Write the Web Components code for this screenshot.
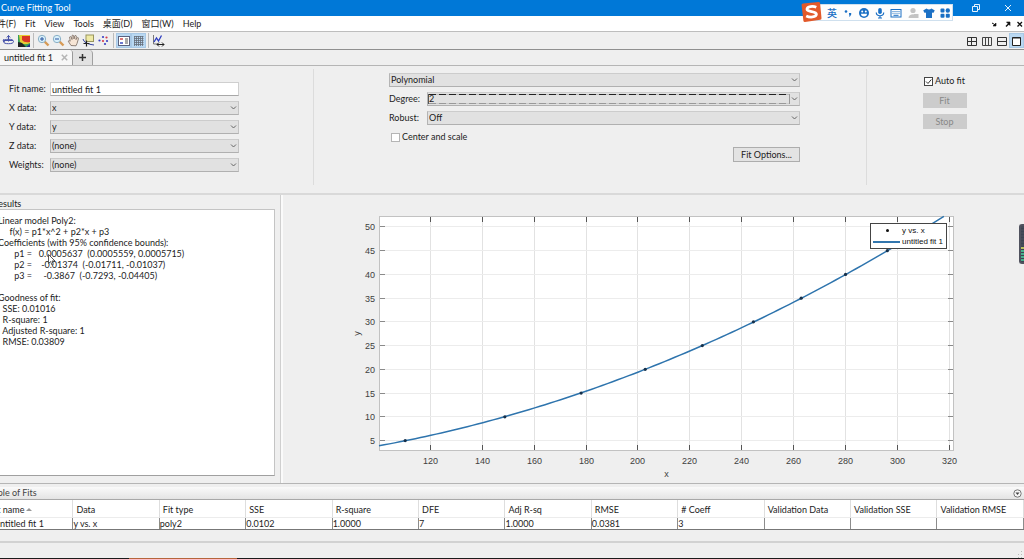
<!DOCTYPE html>
<html lang="en">
<head>
<meta charset="utf-8">
<title>Curve Fitting Tool</title>
<style>
  html, body { margin: 0; height: 100%; }
  body { font: 9px/12px Lato, "Noto Sans CJK SC", sans-serif; color: #1c1c1c; background: #efefef; overflow: hidden; }
</style>
</head>
<body>
<cf-app></cf-app>
<script>
const define = (name, html, setup) => {
  const template = document.createElement('template');
  template.innerHTML = html;
  customElements.define(name, class extends HTMLElement {
    connectedCallback() {
      if (this.shadowRoot) return;
      const root = this.attachShadow({ mode: 'open' });
      root.append(template.content.cloneNode(true));
      if (setup) setup(this, root);
    }
  });
};

/* ---------- title bar ---------- */
define('cf-titlebar', `
<style>
  :host { display: flex; align-items: center; justify-content: space-between; height: 16px; background: #0078d7; color: #fff; }
  span { padding-left: 1px; }
  div { display: flex; gap: 20px; padding-right: 10px; }
  button { all: unset; display: block; width: 12px; height: 12px; }
  svg { display: block; }
</style>
<span>Curve Fitting Tool</span>
<div>
  <button aria-label="Restore"><svg width="12" height="12" viewBox="0 0 12 12" fill="none" stroke="#e8f3fc"><path d="M2.500 4.500h5v5h-5zM4.500 4V2.500h5v5H8"/></svg></button>
  <button aria-label="Close"><svg width="12" height="12" viewBox="0 0 12 12" fill="none" stroke="#e8f3fc"><path d="M3 3l6 6M9 3l-6 6"/></svg></button>
</div>`);

/* ---------- input method bar ---------- */
define('cf-ime', `
<style>
  :host { display: flex; align-items: center; height: 17px; padding-left: 22px; background: #fdfdfd; border: 1px solid #cfe0ee; box-sizing: border-box; width: 149px; color: #1a6fc4; }
  .logo { position: absolute; left: -4px; top: -4px; }
  b { font: 500 10px/14px "Noto Sans CJK SC", sans-serif; width: 15px; }
  .row { display: flex; flex: 1; justify-content: space-between; padding-right: 1px; }
  svg { display: block; }
</style>
<svg class="logo" width="21" height="22" viewBox="0 0 21 22"><path d="M2 2.5 17.5 1a1.5 1.5 0 0 1 1.600 1.200L20.500 17a1.500 1.500 0 0 1-1.300 1.700L4 21a1.500 1.500 0 0 1-1.600-1.300L.6 4.200A1.500 1.500 0 0 1 2 2.500z" fill="#e2592a"/><path d="M15.300 6.200C12 4.700 6.200 5.200 6 8.200c-.1 3 9.500 1.700 9.400 5 -.2 3.300-6.600 3.500-10.200 1.700" fill="none" stroke="#fff" stroke-width="2.800"/></svg>
<b>英</b>
<div class="row">
  <svg width="12" height="12" viewBox="0 0 12 12" fill="#1a6fc4"><circle cx="4" cy="4.500" r="1.300"/><path d="M7 6h2.200v1.500L8 9.500H7l.6-1.700H7z"/></svg>
  <svg width="12" height="12" viewBox="0 0 12 12"><circle cx="6" cy="6" r="5" fill="#1a6fc4"/><circle cx="4.200" cy="4.500" r="1" fill="#fff"/><circle cx="7.800" cy="4.500" r="1" fill="#fff"/><path d="M3 6.800h6a3 2.700 0 0 1-6 0z" fill="#fff"/></svg>
  <svg width="12" height="12" viewBox="0 0 12 12"><rect x="4.200" y="1" width="3.600" height="6" rx="1.800" fill="#1a6fc4"/><path d="M2.300 5.500c0 4.300 7.400 4.300 7.400 0M6 8.800V11M4 11h4" fill="none" stroke="#1a6fc4" stroke-width="1.200"/></svg>
  <svg width="12" height="12" viewBox="0 0 12 12"><rect x="1" y="2.500" width="10" height="7.500" fill="none" stroke="#1a6fc4"/><path d="M2.500 4.500h7M2.500 6.300h7" stroke="#1a6fc4" stroke-dasharray="1 1"/><path d="M3.500 8.300h5" stroke="#1a6fc4"/></svg>
  <svg width="12" height="12" viewBox="0 0 12 12" fill="#c4c4c4"><circle cx="6" cy="3.500" r="2.600"/><path d="M1.500 11c0-5 9-5 9 0zM7 7h4.500v4H7z"/></svg>
  <svg width="12" height="12" viewBox="0 0 12 12" fill="#1a6fc4"><path d="M3.500 1.500q2.500 2 5 0L11.800 3.500 10.300 6 9 5.500V11H3V5.500L1.700 6 .2 3.500z"/></svg>
  <svg width="12" height="12" viewBox="0 0 12 12" fill="#1a6fc4"><rect x="1.500" y="1.500" width="4" height="4" rx="1"/><circle cx="8.800" cy="3.500" r="2.200"/><rect x="1.500" y="6.800" width="4" height="4" rx="1"/><rect x="6.800" y="6.800" width="4" height="4" rx="1"/></svg>
</div>`);

/* ---------- menu bar ---------- */
define('cf-menubar', `
<style>
  :host { display: flex; align-items: center; justify-content: space-between; height: 15px; background: #fff; border-bottom: 1px solid #bdbdbd; }
  nav { display: flex; gap: 9px; margin-left: -12px; }
  a { color: inherit; text-decoration: none; white-space: nowrap; }
  div { display: flex; gap: 4px; }
  div svg:first-child { margin-right: 2px; }
  svg { display: block; }
</style>
<nav><a href="#">文件(F)</a><a href="#">Fit</a><a href="#">View</a><a href="#">Tools</a><a href="#">桌面(D)</a><a href="#">窗口(W)</a><a href="#">Help</a></nav>
<div>
  <svg width="8" height="8" viewBox="0 0 8 8" fill="#111" stroke="#111"><path d="M2 3l3.500 2" fill="none"/><path d="M6 3v3H3z" stroke-width=".6"/></svg>
  <svg width="8" height="8" viewBox="0 0 8 8" fill="#111" stroke="#111"><path d="M2 6.500l3-3" fill="none" stroke-width="1.400"/><path d="M2.500 2H6v3.500z" stroke-width=".6"/></svg>
  <svg width="8" height="8" viewBox="0 0 8 8" fill="none" stroke="#111"><path d="M1.500 2l4.500 4.500M6 2L1.500 6.500" stroke-width="1.300"/></svg>
</div>`);

/* ---------- tool bar ---------- */
define('cf-tool', `
<style>
  :host { display: flex; align-items: center; justify-content: center; width: 15px; height: 15px; box-sizing: border-box; }
  :host([on]) { background: #b9d8f2; border: 1px solid #a9c9e6; }
  button { all: unset; display: block; }
  ::slotted(svg) { display: block; }
</style>
<button><slot></slot></button>`, (el, root) => root.querySelector('button').setAttribute('aria-label', el.title || 'Tool'));

define('cf-toolbar', `
<style>
  :host { display: flex; align-items: center; justify-content: space-between; height: 17px; border-bottom: 1px solid #8f8f8f; background: #efefef; }
  div { display: flex; align-items: center; }
  i { width: 1px; height: 15px; margin: 0 2px; background: #bcbcbc; }
  .left { padding-left: 1px; }
</style>
<div class="left">
  <cf-tool><svg width="13" height="13" viewBox="0 0 13 13" fill="none" stroke="#4450a8"><path d="M2 6.500h9M6.500 1.500v6" /><ellipse cx="6.500" cy="7.500" rx="5" ry="2.200"/><path d="M4.800 3.500l1.700-2 1.700 2M2 5l-1 2 2 1"/></svg></cf-tool>
  <cf-tool><svg width="12" height="12" viewBox="0 0 12 12"><rect width="12" height="12" fill="#27338c"/><path d="M0 0h12v9L8 12H0z" fill="#35a05b"/><path d="M1 0h11v8Q6 11 2 7z" fill="#e8cb34"/><path d="M4 1h8v6Q6 8 4 5z" fill="#d93526"/><path d="M0 7l4 1 4 4H0z" fill="#222"/></svg></cf-tool>
  <i></i>
  <cf-tool><svg width="13" height="13" viewBox="0 0 13 13"><path d="M7.500 7.500l4 4" stroke="#d79a55" stroke-width="2.400"/><circle cx="5" cy="5" r="3.700" fill="#d8f0fb" stroke="#8bb0c6"/><path d="M3 5h4M5 3v4" stroke="#2a55a0"/></svg></cf-tool>
  <cf-tool><svg width="13" height="13" viewBox="0 0 13 13"><path d="M7.500 7.500l4 4" stroke="#d79a55" stroke-width="2.400"/><circle cx="5" cy="5" r="3.700" fill="#d8f0fb" stroke="#8bb0c6"/><path d="M3 5h4" stroke="#2a55a0"/></svg></cf-tool>
  <cf-tool><svg width="13" height="13" viewBox="0 0 13 13"><path d="M4 11.500L1.200 7.200q.6-1.200 2 0L2.600 3q1-1 1.600.2L5 5.500 5 1.600q1-1 1.600 0L7 5 7.900 1.700q1-.7 1.500.4L9 5.600l1.300-1.900q1.200-.4 1.200.8L10 9.500l-1 2.300z" fill="#f7e6d6" stroke="#77685e" stroke-width=".8"/></svg></cf-tool>
  <cf-tool><svg width="13" height="13" viewBox="0 0 13 13"><rect x="4" y="1" width="7.500" height="6.500" fill="#efeaa6" stroke="#99965e"/><path d="M1 5q1 5 11 6" fill="none" stroke="#3544a0"/><path d="M4.500 6.500v6M1.500 9.500h6" stroke="#222" stroke-width="1.200"/></svg></cf-tool>
  <cf-tool><svg width="13" height="13" viewBox="0 0 13 13"><g fill="#3a3fc4"><circle cx="6" cy="3" r="1.100"/><circle cx="2.500" cy="6.500" r="1.100"/><circle cx="10" cy="7" r="1.100"/><circle cx="8" cy="10" r="1.100"/></g><g fill="#d63a4b"><circle cx="9.500" cy="3.500" r="1.100"/><circle cx="6" cy="7" r="1.100"/></g></svg></cf-tool>
  <i></i>
  <cf-tool on><svg width="12" height="12" viewBox="0 0 12 12"><rect x=".5" y="1.500" width="11" height="9" fill="#fff" stroke="#5a6280"/><path d="M2 4h3" stroke="#d04a4a" stroke-width="1.500"/><path d="M2 8h3" stroke="#3a4ac0" stroke-width="1.500"/><path d="M7 4h3M7 6h3M7 8h3" stroke="#555"/></svg></cf-tool>
  <cf-tool on><svg width="12" height="12" viewBox="0 0 12 12" stroke="#666d78" fill="none"><path d="M1.500 1v10M3.500 1v10M5.500 1v10M7.500 1v10M9.500 1v10M1 1.500h9.500M1 3.500h9.500M1 5.500h9.500M1 7.500h9.500M1 9.500h9.500" stroke-width=".8"/></svg></cf-tool>
  <i></i>
  <cf-tool><svg width="13" height="13" viewBox="0 0 13 13" fill="none"><path d="M1.500 1v9H6" stroke="#777"/><path d="M2 8l2.500-4L6.500 7 9.500 1.500" stroke="#2c3cc0" stroke-width="1.300"/><path d="M5 10.500h7M7 8.500l-2 2 2 2M10 8.500l2 2-2 2" stroke="#222"/></svg></cf-tool>
</div>
<div>
  <cf-tool><svg width="10" height="10" viewBox="0 0 10 10" fill="none" stroke="#333"><path d="M.5 1.500h9v8h-9zM4.500 1.500v8M.5 5.500h9"/></svg></cf-tool>
  <cf-tool><svg width="10" height="10" viewBox="0 0 10 10" fill="none" stroke="#444"><path d="M.5 1.500h9v8h-9zM3.500 1.500v8M6.500 1.500v8"/></svg></cf-tool>
  <cf-tool><svg width="10" height="10" viewBox="0 0 10 10" fill="none" stroke="#333"><path d="M.5 1.500h9v8h-9zM.5 5.500h9"/></svg></cf-tool>
  <cf-tool on><svg width="9" height="10" viewBox="0 0 9 10" fill="#fff" stroke="#222"><path d="M.5 1.500h8v8h-8zM.5 2h8"/></svg></cf-tool>
</div>`);

/* ---------- document tabs ---------- */
define('cf-tabs', `
<style>
  :host { display: flex; height: 15px; border-bottom: 1px solid #b5b5b5; }
  .tab { display: flex; align-items: center; justify-content: space-between; width: 64px; padding: 0 4px 0 4px; background: #f7f7f7; border-right: 1px solid #9a9a9a; border-radius: 0 3px 0 0; white-space: nowrap; }
  .add { all: unset; display: flex; align-items: center; justify-content: center; width: 19px; background: #e2e2e2; border-right: 1px solid #a0a0a0; border-radius: 0 4px 0 0; }
  svg { display: block; }
</style>
<div class="tab"><span>untitled fit 1</span><svg width="7" height="7" viewBox="0 0 7 7" stroke="#b5b5b5" stroke-width="1.500"><path d="M.8.8l5.400 5.400M6.200.8L.8 6.200"/></svg></div>
<button class="add" aria-label="New fit"><svg width="9" height="9" viewBox="0 0 9 9" stroke="#333" stroke-width="1.500"><path d="M4.500 1v7M1 4.500h7"/></svg></button>`);

/* ---------- labelled field: text box or drop-down ---------- */
define('cf-field', `
<style>
  :host { display: flex; align-items: center; height: 14px; }
  label { flex: none; width: var(--label, 41px); white-space: nowrap; }
  label:empty { display: none; }
  .box { flex: 1; min-width: 0; position: relative; height: 14px; }
  input, select { appearance: none; display: block; box-sizing: border-box; width: 100%; height: 14px; margin: 0; padding: 0 1px; font: inherit; line-height: 12px; color: inherit; border: 1px solid #cfcfcf; border-bottom-color: #a8a8a8; border-radius: 0; outline: 0; background: #fff; }
  select { background: #e1e1e1; border-color: #cccccc #c4c4c4 #b0b0b0 #b4b4b4; }
  svg { position: absolute; right: 2px; top: 4px; pointer-events: none; }
  .focus { display: none; position: absolute; inset: 2px 10px 2px 1px; border-left: 1px solid #555; border-right: 1px solid #999; pointer-events: none;
    background: repeating-linear-gradient(90deg, #222 0 7px, #bbb 7px 10px) top / 100% 1px no-repeat, repeating-linear-gradient(90deg, #999 0 7px, #ccc 7px 10px) bottom / 100% 1px no-repeat; }
  :host([focused]) .focus { display: block; }
</style>
<label for="c"></label><div class="box"></div>`, (el, root) => {
  root.querySelector('label').textContent = el.getAttribute('label') || '';
  const box = root.querySelector('.box'), value = el.getAttribute('value');
  if (el.hasAttribute('text')) {
    box.innerHTML = '<input id="c" type="text">';
    box.firstChild.value = value;
  } else {
    box.innerHTML = '<select id="c"><option></option></select><svg width="7" height="6" viewBox="0 0 7 6" fill="none" stroke="#666"><path d="M1 1.500l2.500 2.500L6 1.500"/></svg><span class="focus"></span>';
    box.querySelector('option').textContent = value;
  }
  if (!el.getAttribute('label')) box.firstChild.setAttribute('aria-label', 'Fit model');
});

define('cf-check', `
<style>
  :host { display: block; }
  label { display: flex; align-items: center; gap: 2px; white-space: nowrap; }
  input { appearance: none; flex: none; box-sizing: border-box; width: 9px; height: 9px; margin: 0; border: 1px solid #b5b5b5; background: #fff; }
  input:checked { border-color: #444; }
  .m { position: relative; display: flex; }
  svg { position: absolute; inset: 0; display: none; pointer-events: none; }
  input:checked + svg { display: block; }
</style>
<label><span class="m"><input type="checkbox"><svg width="9" height="9" viewBox="0 0 9 9" fill="none" stroke="#333"><path d="M2 4.500l2 2 3.300-4"/></svg></span><slot></slot></label>`,
(el, root) => { root.querySelector('input').checked = el.hasAttribute('checked'); });

define('cf-button', `
<style>
  :host { display: block; }
  button { display: block; box-sizing: border-box; width: 100%; height: 15px; margin: 0; padding: 0; font: inherit; line-height: 13px; color: inherit; border: 1px solid #adadad; border-radius: 0; background: #e3e3e3; }
  button:disabled { border-color: #cccccc; background: #cccccc; color: #888; }
</style>
<button><slot></slot></button>`, (el, root) => { root.querySelector('button').disabled = el.hasAttribute('disabled'); });

/* ---------- fit settings ---------- */
define('cf-settings', `
<style>
  :host { display: grid; grid-template-columns: 313px 1fr 158px; box-sizing: border-box; height: 129px; padding: 3px 0 8px; border-bottom: 2px solid #d9d9d9; }
  section { display: flex; flex-direction: column; gap: 5px; }
  section + section { border-left: 1px solid #dcdcdc; }
  .data { padding: 13px 74px 0 9px; }
  .model { padding: 4px 66px 0 75px; --label: 38px; }
  .model cf-check { margin: 1px 0 0 2px; }
  .model cf-button { align-self: flex-end; width: 67px; margin-top: -1px; }
  .run { gap: 6px; padding: 6px 2px 0 0; align-items: center; }
  .run cf-button { width: 44px; }
</style>
<section class="data">
  <cf-field text label="Fit name:" value="untitled fit 1"></cf-field>
  <cf-field label="X data:" value="x"></cf-field>
  <cf-field label="Y data:" value="y"></cf-field>
  <cf-field label="Z data:" value="(none)"></cf-field>
  <cf-field label="Weights:" value="(none)"></cf-field>
</section>
<section class="model">
  <cf-field value="Polynomial"></cf-field>
  <cf-field focused label="Degree:" value="2"></cf-field>
  <cf-field label="Robust:" value="Off"></cf-field>
  <cf-check>Center and scale</cf-check>
  <cf-button>Fit Options...</cf-button>
</section>
<section class="run">
  <cf-check checked>Auto fit</cf-check>
  <cf-button disabled>Fit</cf-button>
  <cf-button disabled>Stop</cf-button>
</section>`);

/* ---------- results ---------- */
define('cf-results', `
<style>
  :host { display: flex; flex-direction: column; box-sizing: border-box; padding: 3px 5px 7px 0; overflow: hidden; }
  h2 { margin: 0 0 0 -7px; font: inherit; }
  pre { flex: 1; margin: -1px 0 0 -4px; padding: 5px 0 0 1px; font: inherit; line-height: 11px; background: #fff; border: 1px solid #c4c4c4; border-bottom-color: #a0a0a0; }
</style>
<h2>Results</h2>
<pre></pre>`, (el, root) => {
  root.querySelector('pre').textContent = [
    'Linear model Poly2:',
    '     f(x) = p1*x^2 + p2*x + p3',
    'Coefficients (with 95% confidence bounds):',
    '       p1 =   0.0005637  (0.0005559, 0.0005715)',
    '       p2 =    -0.01374  (-0.01711, -0.01037)',
    '       p3 =     -0.3867  (-0.7293, -0.04405)',
    '',
    'Goodness of fit:',
    '  SSE: 0.01016',
    '  R-square: 1',
    '  Adjusted R-square: 1',
    '  RMSE: 0.03809'].join('\n');
});

/* ---------- plot ---------- */
define('cf-plot', `
<style>
  :host { display: block; position: relative; min-width: 0; font-family: "Liberation Sans", sans-serif; color: #404040; }
  svg { display: block; width: 100%; height: 100%; }
  text { fill: #404040; font-size: 9px; }
  .legend { position: absolute; right: 77px; top: 28px; display: grid; grid-template-columns: 29px auto; align-items: center; padding: 1px 3px 1px 2px; border: 1px solid #444; background: #fff; color: #111; font: 8px/11px "Liberation Sans", sans-serif; white-space: nowrap; }
  .dot { justify-self: center; width: 3px; height: 3px; border-radius: 50%; background: #111; }
  .line { height: 2px; margin-right: 2px; background: #3276ae; }
</style>
<svg></svg>
<div class="legend"><i class="dot"></i><span>y vs. x</span><i class="line"></i><span>untitled fit 1</span></div>`, (el, root) => {
  const svg = root.querySelector('svg');
  const view = { x0: 100.2, x1: 321.8, y0: 2.8, y1: 52.3 };
  const margin = { left: 96, right: 70, top: 21, bottom: 32 };
  const data = [[110.3, 5], [148.7, 10], [178.1, 15], [202.8, 20], [224.8, 25], [244.5, 30], [262.9, 35], [280, 40], [296.1, 45], [311.3, 50]];
  const fit = x => 0.0005637 * x * x - 0.01374 * x - 0.3867;
  const draw = () => {
    const w = el.clientWidth, h = el.clientHeight;
    const L = margin.left, T = margin.top, R = w - margin.right, B = h - margin.bottom;
    const X = v => L + (v - view.x0) / (view.x1 - view.x0) * (R - L);
    const Y = v => B - (v - view.y0) / (view.y1 - view.y0) * (B - T);
    const snap = v => Math.floor(v) + 0.5;
    let s = `<rect x="${L}" y="${T}" width="${R - L}" height="${B - T}" fill="#fff"/>`;
    for (let v = 120; v <= 320; v += 20) {
      const x = snap(X(v));
      s += `<path d="M${x} ${T}V${B}" stroke="#e2e2e2"/><path d="M${x} ${T}v6M${x} ${B}v-6" stroke="#555"/><text x="${x}" y="${B + 13}" text-anchor="middle">${v}</text>`;
    }
    for (let v = 5; v <= 50; v += 5) {
      const y = snap(Y(v));
      s += `<path d="M${L} ${y}H${R}" stroke="#ececec"/><path d="M${L} ${y}h6M${R} ${y}h-6" stroke="#8a8a8a"/><text x="${L - 4}" y="${y + 3}" text-anchor="end">${v}</text>`;
    }
    s += `<rect x="${L + .5}" y="${T + .5}" width="${R - L - 1}" height="${B - T - 1}" fill="none" stroke="#c2c2c2"/>`;
    const pts = [];
    for (let v = view.x0; v < 317.9; v += 2) pts.push(`${X(v)} ${Y(fit(v))}`);
    pts.push(`${X(317.9)} ${Y(fit(317.9))}`);
    s += `<path d="M${pts.join('L')}" fill="none" stroke="#2e74ad" stroke-width="1.500"/>`;
    for (const [x, y] of data) s += `<circle cx="${X(x)}" cy="${Y(y)}" r="1.600" fill="#16304a"/>`;
    s += `<text x="${(L + R) / 2}" y="${B + 26}" text-anchor="middle">x</text>`;
    const my = (T + B) / 2;
    s += `<text x="${L - 19}" y="${my}" text-anchor="middle" transform="rotate(-90 ${L - 19} ${my})">y</text>`;
    svg.innerHTML = s;
  };
  draw();
  new ResizeObserver(draw).observe(el);
});

/* ---------- table of fits ---------- */
define('cf-table', `
<style>
  :host { display: block; overflow: hidden; }
  header { display: flex; align-items: center; justify-content: space-between; height: 12px; padding-right: 2px; border-bottom: 1px solid #a8a8a8; background: linear-gradient(#fafafa, #e4e4e4); }
  h2 { margin: 0 0 0 -11px; font: inherit; color: #444; }
  svg { display: block; }
  table { width: calc(100% + 13px); margin-left: -13px; table-layout: fixed; border-collapse: separate; border-spacing: 0; background: #fff; border-bottom: 1px solid #777; }
  th, td { box-sizing: border-box; font-weight: normal; text-align: left; white-space: nowrap; border-right: 1px solid #dedede; }
  th { height: 18px; padding: 2px 0 0 3px; border-bottom: 1px solid #ececec; }
  td { height: 11px; padding: 0; line-height: 11px; border-right-color: #8c8c8c; }
  th svg { display: inline-block; margin-left: 2px; vertical-align: 2px; }
  td:first-child { padding-left: 8px; }
</style>
<header><h2>Table of Fits</h2><svg width="9" height="9" viewBox="0 0 9 9"><circle cx="4.500" cy="4.500" r="3.700" fill="#f6f6f6" stroke="#777"/><path d="M2.500 3.500h4L4.500 6z" fill="#444"/></svg></header>
<table><thead><tr></tr></thead><tbody><tr></tr></tbody></table>`, (el, root) => {
  const rows = [['Fit name', 'untitled fit 1'], ['Data', 'y vs. x'], ['Fit type', 'poly2'], ['SSE', '0.0102'], ['R-square', '1.0000'], ['DFE', '7'], ['Adj R-sq', '1.0000'], ['RMSE', '0.0381'], ['# Coeff', '3'], ['Validation Data', ''], ['Validation SSE', ''], ['Validation RMSE', '']];
  root.querySelector('thead tr').innerHTML = rows.map(([h], i) => `<th scope="col">${h}${i ? '' : '<svg width="6" height="3" viewBox="0 0 6 3"><path d="M0 3l3-3 3 3z" fill="#999"/></svg>'}</th>`).join('');
  root.querySelector('tbody tr').innerHTML = rows.map(([, d]) => `<td>${d}</td>`).join('');
});

/* ---------- status bar and the edge of the task bar ---------- */
define('cf-status', `
<style>
  :host { display: flex; flex-direction: column; align-items: flex-end; justify-content: flex-end; height: 16px; margin-top: 11px; border-top: 2px solid #d2d2d2; }
  svg { display: block; }
  .task { width: 100%; height: 1px; background: linear-gradient(90deg, #1b1b1b 0 129px, #b5653c 129px 237px, #1b1b1b 237px); }
</style>
<svg width="7" height="7" viewBox="0 0 7 7" fill="#bbb"><path d="M4 0h1v1H4zM4 3h1v1H4zM1 3h1v1H1zM4 6h1v1H4zM1 6h1v1H1z"/></svg>
<div class="task"></div>`);

define('cf-app', `
<style>
  :host { display: flex; flex-direction: column; height: 100vh; position: relative; overflow: hidden; }
  cf-titlebar, cf-menubar, cf-toolbar, cf-tabs, cf-settings, cf-table, cf-status { flex: none; }
  main { flex: 1; min-height: 0; display: grid; grid-template-columns: 281px 1fr; gap: 2px; background: #fafafa; margin-bottom: 3px; border-bottom: 1px solid #b5b5b5; }
  main > * { background: #efefef; }
  cf-results { border-right: 1px solid #cfcfcf; }
  cf-ime { position: absolute; right: 71px; top: 4px; }
  .pointer { position: absolute; left: 48px; top: 254px; }
  .meter { position: absolute; right: 0; top: 224px; box-sizing: border-box; width: 5px; height: 40px; border: 2px solid #50525e; border-right: 0; border-radius: 3px 0 0 3px; background: repeating-linear-gradient(transparent 0 2px, #3d4452 2px 3px), linear-gradient(#454b58 0 20px, #b8c05c 20px 24px, #46b08c 24px); }
</style>
<cf-titlebar></cf-titlebar>
<cf-menubar></cf-menubar>
<cf-toolbar></cf-toolbar>
<cf-tabs></cf-tabs>
<cf-settings></cf-settings>
<main><cf-results></cf-results><cf-plot></cf-plot></main>
<cf-table></cf-table>
<cf-status></cf-status>
<cf-ime></cf-ime>
<svg class="pointer" width="8" height="12" viewBox="0 0 8 12"><path d="M.5.5v9l2-2 1.500 3.500 1.300-.6L4 7h3z" fill="#fff" stroke="#333" stroke-width=".8"/></svg>
<div class="meter"></div>`);
</script>
</body>
</html>
